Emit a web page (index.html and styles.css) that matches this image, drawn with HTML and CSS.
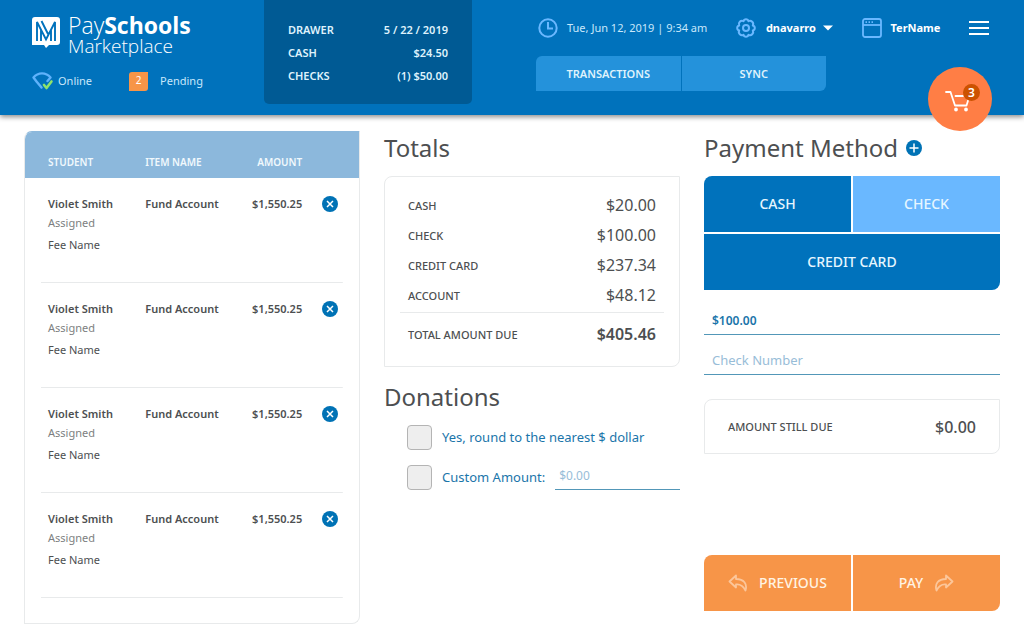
FILE: index.html
```html
<!DOCTYPE html>
<html lang="en">
<head>
<meta charset="utf-8">
<meta name="viewport" content="width=device-width, initial-scale=1">
<title>PaySchools Marketplace</title>
<link rel="stylesheet" href="styles.css">
</head>
<body>
<header class="topbar">
  <div class="brand">
    <a class="logo" href="#">
      <svg class="logo-mark" viewBox="0 0 28 32" aria-hidden="true">
        <path fill="#fff" d="M3 0h22q3 0 3 3v22q0 3-3 3h-8l-3 3-2-3H0V3q0-3 3-3z"/>
        <path fill="none" stroke="#0072bc" stroke-width="1.900" d="M5 24V5L14 22.500L23 5V24M9 24V13M19 24V13M9.500 4L16 17"/>
      </svg>
      <span class="logo-text">
        <span class="logo-top">Pay<b>Schools</b></span>
        <span class="logo-bottom">Marketplace</span>
      </span>
    </a>
    <div class="status">
      <span class="status-item">
        <svg class="online-icon" viewBox="0 0 22 18" fill="none" aria-hidden="true">
          <path stroke="#5fb2fb" stroke-width="2.400" stroke-linecap="round" stroke-linejoin="round" d="M9.500 15.500L4.500 9.500M4.500 9.500L1.500 5.500C4 2.500 7 1.400 10 1.400S16 2.500 18.500 5.500L15.500 9"/>
          <path stroke="#8fe36b" stroke-width="2.600" stroke-linecap="round" stroke-linejoin="round" d="M12 13L14.500 16L19.500 9.500"/>
        </svg>
        Online
      </span>
      <span class="status-item pending"><span class="count">2</span>Pending</span>
    </div>
  </div>

  <dl class="drawer">
    <div class="drawer-row"><dt>DRAWER</dt><dd>5 / 22 / 2019</dd></div>
    <div class="drawer-row"><dt>CASH</dt><dd>$24.50</dd></div>
    <div class="drawer-row"><dt>CHECKS</dt><dd>(1) $50.00</dd></div>
  </dl>

  <div class="tools">
    <div class="tools-row">
      <span class="clock">
        <svg class="tool-icon" viewBox="0 0 20 20" fill="none" stroke="#6ab8ff" stroke-width="2" aria-hidden="true"><circle cx="10" cy="10" r="8.700"/><path d="M10 4v6.500h5"/></svg>
        Tue, Jun 12, 2019 | 9:34 am
      </span>
      <button class="tool-button user" type="button">
        <svg class="tool-icon" viewBox="0 0 20 20" fill="none" stroke="#6ab8ff" stroke-width="2" stroke-linejoin="round" aria-hidden="true">
          <path d="M10 1.200Q12 1.200 12.500 3.200Q14.500 2.200 16.200 3.800T16.800 7.500Q18.800 8 18.800 10T16.800 12.500Q17.800 14.500 16.200 16.200T12.500 16.800Q12 18.800 10 18.800T7.500 16.800Q5.500 17.800 3.800 16.200T3.200 12.500Q1.200 12 1.200 10T3.200 7.500Q2.200 5.500 3.800 3.800T7.500 3.200Q8 1.200 10 1.200z"/>
          <circle cx="10" cy="10" r="3"/>
        </svg>
        dnavarro
        <svg class="caret" viewBox="0 0 10 6" aria-hidden="true"><path fill="#fff" d="M0 .5h10L5 5.500z"/></svg>
      </button>
      <button class="tool-button terminal" type="button">
        <svg class="tool-icon" viewBox="0 0 20 20" fill="none" stroke="#6ab8ff" stroke-width="1.800" aria-hidden="true"><rect x="1" y="1" width="18" height="18" rx="2"/><path d="M1 7h18"/><path stroke-dasharray="1.500 1.500" d="M3.500 4.200h9"/></svg>
        TerName
      </button>
      <button class="tool-button menu" type="button" aria-label="Menu">
        <svg class="tool-icon" viewBox="0 0 20 20" stroke="#fff" stroke-width="2" aria-hidden="true"><path d="M0 4h20M0 10h20M0 16h20"/></svg>
      </button>
    </div>
    <div class="tabs">
      <button class="tab" type="button">TRANSACTIONS</button>
      <button class="tab" type="button">SYNC</button>
    </div>
  </div>

  <button class="cart" type="button" aria-label="Cart, 3 items">
    <svg class="cart-icon" viewBox="0 0 26 22" fill="none" stroke="#fff" stroke-width="1.800" stroke-linecap="round" stroke-linejoin="round" aria-hidden="true">
      <path d="M1 2h4.500L10 15.500h11.500L24.500 6M10.500 6H18"/>
      <circle cx="11" cy="19.500" r="1" fill="#fff"/><circle cx="21" cy="19.500" r="1" fill="#fff"/>
    </svg>
    <span class="cart-count">3</span>
  </button>
</header>

<main class="content">
  <section class="card items">
    <table class="items-table">
      <colgroup><col class="col-student"><col class="col-item"><col class="col-amount"><col></colgroup>
      <thead>
        <tr><th>STUDENT</th><th>ITEM NAME</th><th class="amount">AMOUNT</th><th></th></tr>
      </thead>
      <tbody>
        <tr>
          <td>Violet Smith<span class="assigned">Assigned</span><span class="fee">Fee Name</span></td>
          <td>Fund Account</td><td class="amount">$1,550.25</td>
          <td><button class="round-button remove" type="button" aria-label="Remove"><svg viewBox="0 0 16 16" aria-hidden="true"><path d="M5 5l6 6M11 5l-6 6"/></svg></button></td>
        </tr>
        <tr>
          <td>Violet Smith<span class="assigned">Assigned</span><span class="fee">Fee Name</span></td>
          <td>Fund Account</td><td class="amount">$1,550.25</td>
          <td><button class="round-button remove" type="button" aria-label="Remove"><svg viewBox="0 0 16 16" aria-hidden="true"><path d="M5 5l6 6M11 5l-6 6"/></svg></button></td>
        </tr>
        <tr>
          <td>Violet Smith<span class="assigned">Assigned</span><span class="fee">Fee Name</span></td>
          <td>Fund Account</td><td class="amount">$1,550.25</td>
          <td><button class="round-button remove" type="button" aria-label="Remove"><svg viewBox="0 0 16 16" aria-hidden="true"><path d="M5 5l6 6M11 5l-6 6"/></svg></button></td>
        </tr>
        <tr>
          <td>Violet Smith<span class="assigned">Assigned</span><span class="fee">Fee Name</span></td>
          <td>Fund Account</td><td class="amount">$1,550.25</td>
          <td><button class="round-button remove" type="button" aria-label="Remove"><svg viewBox="0 0 16 16" aria-hidden="true"><path d="M5 5l6 6M11 5l-6 6"/></svg></button></td>
        </tr>
      </tbody>
    </table>
  </section>

  <section class="column">
    <h2 class="title">Totals</h2>
    <dl class="card totals">
      <div class="total-row"><dt>CASH</dt><dd>$20.00</dd></div>
      <div class="total-row"><dt>CHECK</dt><dd>$100.00</dd></div>
      <div class="total-row"><dt>CREDIT CARD</dt><dd>$237.34</dd></div>
      <div class="total-row"><dt>ACCOUNT</dt><dd>$48.12</dd></div>
      <div class="total-row due"><dt>TOTAL AMOUNT DUE</dt><dd>$405.46</dd></div>
    </dl>
    <h2 class="title donations-title">Donations</h2>
    <div class="donations">
      <div class="donation">
        <input class="check" type="checkbox" id="round-up">
        <label for="round-up">Yes, round to the nearest $ dollar</label>
      </div>
      <div class="donation">
        <input class="check" type="checkbox" id="custom">
        <label for="custom">Custom Amount:</label>
        <input class="field custom-amount" type="text" placeholder="$0.00" aria-label="Custom amount">
      </div>
    </div>
  </section>

  <section class="column">
    <h2 class="title">Payment Method
      <button class="round-button" type="button" aria-label="Add payment method"><svg viewBox="0 0 16 16" aria-hidden="true"><path d="M8 3.500v9M3.500 8h9"/></svg></button>
    </h2>
    <div class="methods">
      <button class="method" type="button">CASH</button>
      <button class="method selected" type="button">CHECK</button>
      <button class="method wide" type="button">CREDIT CARD</button>
    </div>
    <div class="fields">
      <input class="field filled" type="text" value="$100.00" aria-label="Amount">
      <input class="field" type="text" placeholder="Check Number" aria-label="Check number">
    </div>
    <dl class="card still-due"><dt>AMOUNT STILL DUE</dt><dd>$0.00</dd></dl>
    <div class="actions">
      <button class="action" type="button">
        <svg class="arrow" viewBox="0 0 20 18" aria-hidden="true"><path d="M8 1.500L1.500 7.500L8 13.500V10.500C12 10 15 11.500 17.500 16.500C19.500 10 16 5 8 5z"/></svg>
        PREVIOUS
      </button>
      <button class="action" type="button">
        PAY
        <svg class="arrow" viewBox="0 0 20 18" aria-hidden="true"><path d="M12 1.500L18.500 7.500L12 13.500V10.500C8 10 5 11.500 2.500 16.500C.5 10 4 5 12 5z"/></svg>
      </button>
    </div>
  </section>
</main>
</body>
</html>
```
FILE: styles.css
```css
* { box-sizing: border-box; }

body {
  margin: 0;
  min-height: 100vh;
  display: flex;
  flex-direction: column;
  background: #fff;
  color: #4d4f51;
  font: 500 11px/16px "Noto Sans", "Open Sans", sans-serif;
}

button {
  margin: 0;
  padding: 0;
  border: 0;
  background: none;
  color: inherit;
  font: inherit;
  cursor: pointer;
}

dl, dd, h2 { margin: 0; }
svg { display: block; flex: none; }

/* Header */
.topbar {
  position: relative;
  display: flex;
  padding: 0 32px;
  min-height: 115px;
  background: #0072bc;
  color: #fff;
  box-shadow: 0 2px 5px rgba(0, 0, 0, .45);
}

.brand { width: 232px; padding-top: 14px; }
.logo { display: flex; gap: 8px; color: #fff; text-decoration: none; }
.logo-mark { width: 28px; height: 32px; margin-top: 3px; }
.logo-text { display: flex; flex-direction: column; font-family: "Open Sans", sans-serif; font-weight: 300; }
.logo-top { font-size: 23px; line-height: 22px; }
.logo-top b { font-weight: 700; }
.logo-bottom { font-size: 19px; line-height: 20px; }

.status { display: flex; gap: 37px; margin-top: 15px; color: #c9e8fb; font-weight: 400; line-height: 20px; }
.status-item { display: flex; align-items: center; gap: 4px; }
.online-icon { width: 22px; height: 18px; }
.pending { gap: 12px; }
.count {
  width: 19px;
  height: 19px;
  border-radius: 3px 0;
  background: #f79548;
  color: #fff;
  font-size: 10px;
  line-height: 16px;
  text-align: center;
}

.drawer {
  width: 208px;
  height: 104px;
  padding: 18px 24px;
  border-radius: 0 0 5px 5px;
  background: #005a94;
  color: #dff2fc;
  font-weight: 600;
  line-height: 23px;
}
.drawer-row { display: flex; justify-content: space-between; }

.tools { flex: 1; margin-left: 64px; padding-top: 16px; }
.tools-row { display: flex; align-items: center; justify-content: space-between; height: 24px; padding-left: 2px; }
.clock, .tool-button { display: flex; align-items: center; gap: 9px; }
.clock { color: #c9e8fb; font-weight: 400; }
.tool-button { font-weight: 700; }
.tool-icon { width: 20px; height: 20px; }
.user { gap: 10px; }
.caret { width: 10px; height: 6px; margin-left: -3px; }
.menu { margin-right: 3px; }
.tabs { display: flex; gap: 1px; width: 290px; margin-top: 16px; border-radius: 6px 0; overflow: hidden; }
.tab { flex: 1; height: 35px; background: #2492db; color: #dff2fc; font-weight: 600; }

.cart {
  position: absolute;
  right: 32px;
  bottom: -16px;
  width: 64px;
  height: 64px;
  border-radius: 50%;
  background: #ff7e45;
}
.cart-icon { width: 26px; height: 22px; margin: 4px 0 0 17px; }
.cart-count {
  position: absolute;
  top: 17px;
  right: 12px;
  width: 17px;
  height: 17px;
  border-radius: 50%;
  background: #cc5200;
  font-weight: 600;
  font-size: 12px;
  line-height: 17px;
}

/* Page body */
.content {
  flex: 1;
  display: grid;
  grid-template-columns: 42fr 37fr 37fr;
  gap: 24px;
  padding: 16px 24px;
}
.column { display: flex; flex-direction: column; }
.title {
  display: flex;
  align-items: center;
  gap: 8px;
  margin: 1px 0 12px;
  font-weight: 400;
  font-size: 24px;
  line-height: 32px;
}
.card { border: 1px solid #e8eaeb; border-radius: 8px 0; }

.round-button { width: 16px; height: 16px; border-radius: 50%; background: #0072b5; }
.round-button svg { width: 16px; height: 16px; fill: none; stroke: #fff; stroke-width: 1.5; }

/* Line items */
.items { overflow: hidden; border-top-color: #8cb8dc; }
.items-table { width: 100%; border-collapse: collapse; table-layout: fixed; }
.col-student { width: 36%; }
.col-item { width: 22%; }
.col-amount { width: 25%; }
.items-table thead { background: #8cb8dc; color: #f1f8fd; }
.items-table th { height: 46px; padding: 13px 0 0; font-weight: 600; font-size: 10px; text-align: left; }
.items-table td { height: 105px; padding: 18px 0 0; font-weight: 600; vertical-align: top; white-space: nowrap; }
.items-table th:first-child, .items-table td:first-child { padding-left: 23px; }
.items-table tbody tr { background: linear-gradient(#e8eaeb, #e8eaeb) center bottom / calc(100% - 32px) 1px no-repeat; }
.items-table .amount { text-align: right; }
.assigned, .fee { display: block; font-weight: 400; }
.assigned { margin-top: 3px; color: #7d7f81; }
.fee { margin-top: 6px; }
.remove { display: block; margin-left: 20px; }

/* Totals */
.totals { padding: 13px 15px 11px; }
.total-row { display: flex; align-items: center; justify-content: space-between; height: 30px; padding: 0 8px; }
.total-row dt { padding-top: 2px; }
.total-row dd { font-weight: 400; font-size: 16px; }
.total-row.due { height: 43px; margin-top: 2px; border-top: 1px solid #e8eaeb; }
.total-row.due dd { font-weight: 600; }

/* Donations */
.donations-title { margin-top: 14px; }
.donations { display: flex; flex-direction: column; gap: 16px; padding-left: 23px; color: #1a75aa; font-size: 13px; font-weight: 400; }
.donation { display: flex; align-items: center; gap: 10px; height: 24px; }
.check {
  appearance: none;
  flex: none;
  width: 25px;
  height: 25px;
  margin: 0;
  border: 1px solid #b4b4b4;
  border-radius: 4px;
  background: #eee;
}
.check:checked { background: #0072bc; }

.field {
  width: 100%;
  min-width: 0;
  height: 40px;
  padding: 16px 8px 5px;
  border: 0;
  border-bottom: 1px solid #5297b8;
  background: none;
  color: #1a75aa;
  font: 400 13px/18px "Noto Sans", "Open Sans", sans-serif;
}
.field::placeholder { color: #98bdd8; opacity: 1; }
.field.filled { font-weight: 600; font-size: 12px; }
.field.custom-amount { flex: 1; height: 26px; padding: 2px 4px 5px; font-size: 12px; }

/* Payment */
.methods { display: grid; grid-template-columns: 1fr 1fr; gap: 2px; border-radius: 8px 0; overflow: hidden; }
.method { height: 56px; background: #0072bc; color: #e6f6ff; font-weight: 500; font-size: 14px; }
.method.selected { background: #6ab8ff; }
.wide { grid-column: 1 / -1; }
.fields { display: flex; flex-direction: column; margin-top: 5px; }
.still-due { display: flex; align-items: center; justify-content: space-between; margin-top: 24px; padding: 0 23px; height: 55px; }
.still-due dd { font-weight: 500; font-size: 16px; }
.actions { display: grid; grid-template-columns: 1fr 1fr; gap: 2px; margin: auto 0 13px; border-radius: 8px 0; overflow: hidden; }
.action {
  display: flex;
  align-items: center;
  justify-content: center;
  gap: 11px;
  height: 56px;
  background: #f79548;
  color: #fff3e3;
  font-weight: 500;
  font-size: 14px;
}
.arrow { width: 20px; height: 18px; fill: none; stroke: #fcc69a; stroke-width: 1.8; stroke-linejoin: round; }
```
